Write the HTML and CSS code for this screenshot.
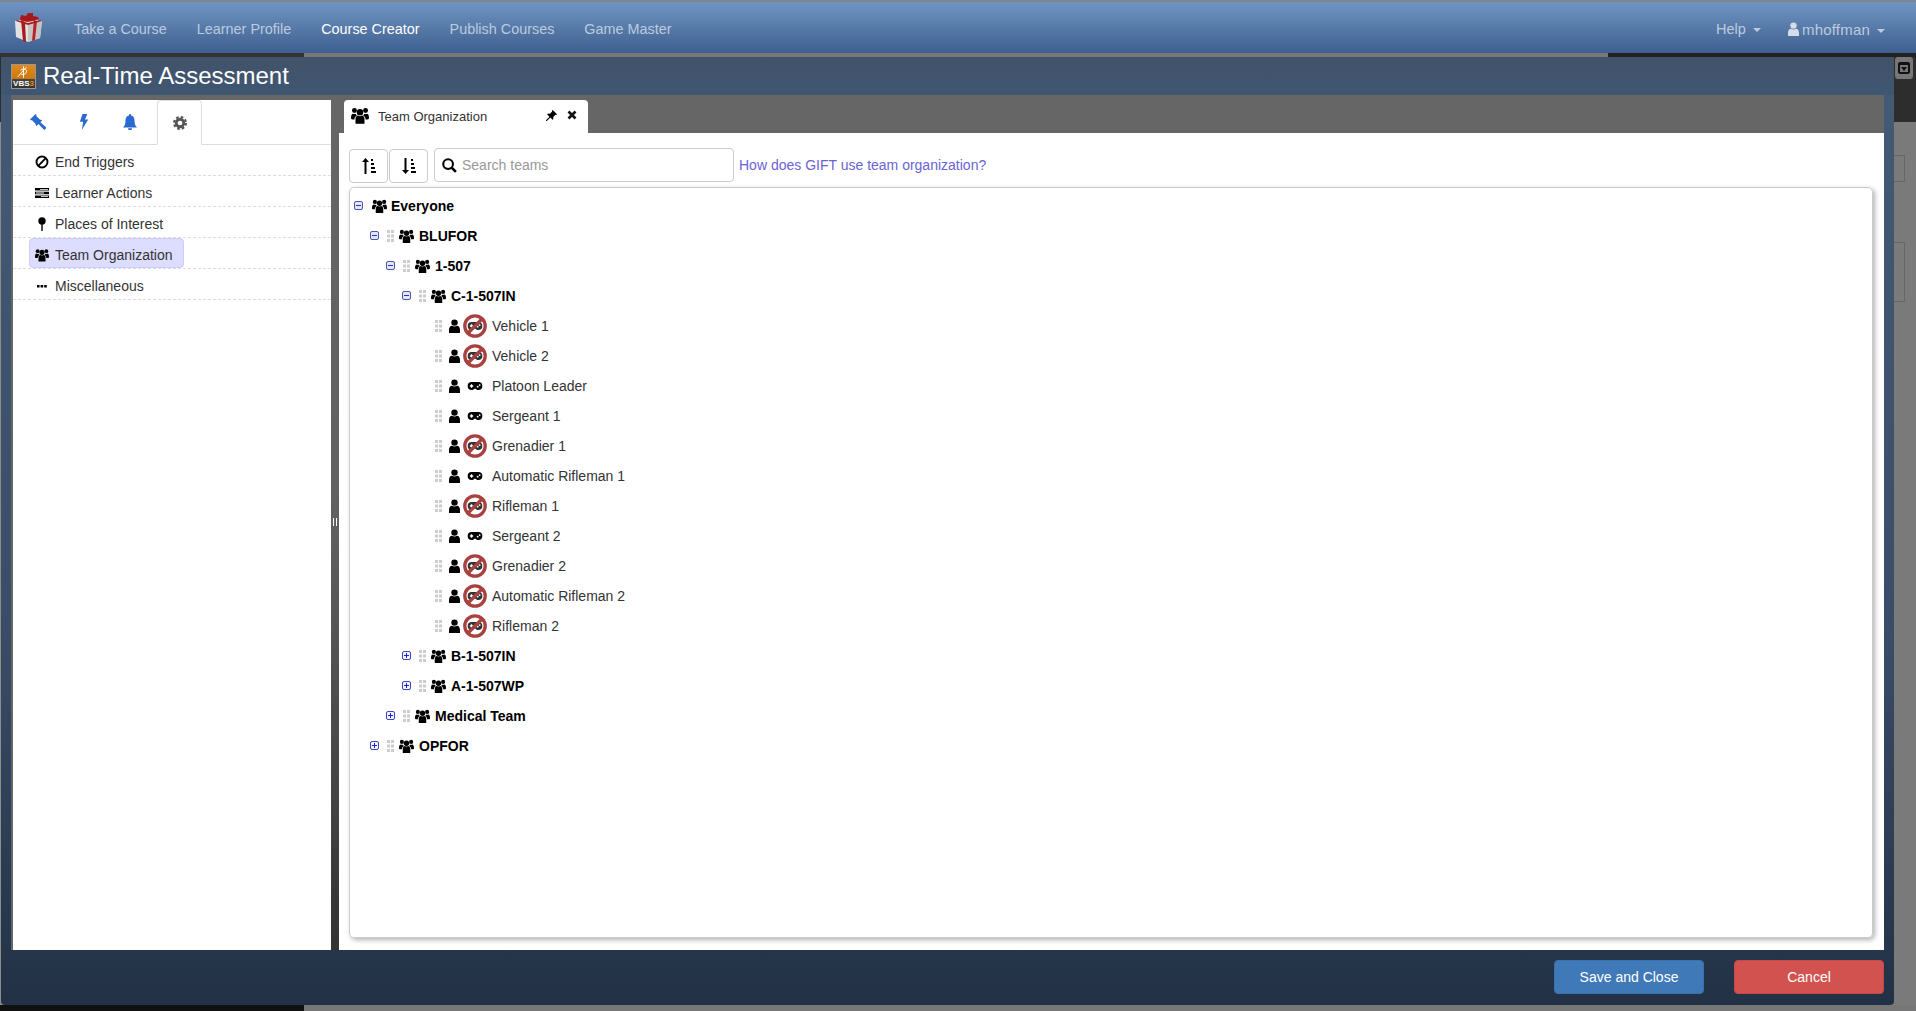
FILE: index.html
```html
<!DOCTYPE html>
<html>
<head>
<meta name="viewport" content="width=device-width, initial-scale=1.0">
<title>Real-Time Assessment</title>
<link rel="stylesheet" href="styles.css">
</head>

<body>

<!-- icons, reused with <use> further down -->
<svg class="sprite" xmlns="http://www.w3.org/2000/svg">
  <symbol id="i-users" viewBox="0 0 24 22">
    <circle cx="12" cy="6.500" r="4.300"/>
    <circle cx="4.600" cy="4.400" r="3.300"/>
    <circle cx="19.400" cy="4.400" r="3.300"/>
    <path d="M6 22v-6.500c0-2.800 1.600-4.500 3.400-4.500 1.500 1 3.700 1 5.200 0 1.800 0 3.400 1.700 3.400 4.500V22z"/>
    <path d="M0 14c0-3.300 1-5.500 2.600-5.500 1.200.8 2.700.8 3.700.3.300 1 .800 1.700 1.500 2.200-2 .9-3.200 2.700-3.200 5.300H2c-1.300 0-2-.7-2-2.300z"/>
    <path d="M24 14c0-3.300-1-5.500-2.600-5.500-1.200.8-2.700.8-3.700.3-.3 1-.8 1.700-1.500 2.200 2 .9 3.200 2.700 3.200 5.300H22c1.300 0 2-.7 2-2.300z"/>
  </symbol>
  <symbol id="i-user" viewBox="0 0 12 15">
    <circle cx="6" cy="3.800" r="3.500"/>
    <path d="M0 15v-3.500C0 9 1.400 7.400 3 7.200c1.800 1.200 4.200 1.200 6 0 1.600.2 3 1.800 3 4.300V15z"/>
  </symbol>
  <symbol id="i-pad" viewBox="0 0 24 14">
    <path d="M7 1h10a6 6 0 0 1 0 12c-2 0-3-.9-4-2h-2c-1 1.100-2 2-4 2A6 6 0 0 1 7 1z"/>
    <path fill="#fff" d="M5.800 4.500h2v1.500h1.500v2H7.800v1.500h-2V8H4.300V6h1.500z"/>
    <circle fill="#fff" cx="16" cy="8" r="1.400"/>
    <circle fill="#fff" cx="19" cy="5.600" r="1.400"/>
  </symbol>
  <symbol id="i-nopad" viewBox="0 0 24 24">
    <use href="#i-pad" x="4" y="5" width="16" height="14" opacity=".8"/>
    <circle cx="12" cy="12" r="10.200" fill="none" stroke="#a8413f" stroke-width="3.300"/>
    <path d="M5 19L19 5" stroke="#a8413f" stroke-width="3.300"/>
  </symbol>
  <symbol id="i-grip" viewBox="0 0 7 12">
    <path fill="#ccc" d="M0 0h3v3H0zM4 0h3v3H4zM0 4.500h3v3H0zM4 4.500h3v3H4zM0 9h3v3H0zM4 9h3v3H4z"/>
  </symbol>
  <symbol id="i-minus" viewBox="0 0 9 9">
    <rect x=".5" y=".5" width="8" height="8" rx="1.500" fill="#e4e6f6" stroke="#4a55b8"/>
    <path d="M2 4.500h5" stroke="#2a35a8"/>
  </symbol>
  <symbol id="i-plus" viewBox="0 0 9 9">
    <rect x=".5" y=".5" width="8" height="8" rx="1.500" fill="#f2f3fc" stroke="#3a44c4"/>
    <path d="M2 4.500h5M4.500 2v5" stroke="#1a22c8"/>
  </symbol>
  <symbol id="i-gavel" viewBox="0 0 16 16">
    <path d="M0 6.500L5.500 1l1.200 1.200-.6.600 4.200 4.200.6-.6 1.200 1.200L6.600 13 5.400 11.800l.6-.6-4.200-4.200-.6.600z" transform="translate(0 -1)"/>
    <path d="M8 9.500l1.800-1.800 6 5.300c.5.500.5 1.200 0 1.700l-.6.600c-.5.500-1.200.5-1.700 0z"/>
  </symbol>
  <symbol id="i-bolt" viewBox="0 0 10 16">
    <path d="M3.500 0h4.800L6 5.500h3.200L2.800 16l1.400-8.200H.9z"/>
  </symbol>
  <symbol id="i-bell" viewBox="0 0 16 16">
    <path d="M8 0c.6 0 1 .4 1 1v.6c2.500.4 3.500 2.400 3.500 4.900 0 4 1 5.500 2.500 7H1c1.500-1.500 2.500-3 2.500-7C3.500 4 4.500 2 7 1.600V1c0-.6.4-1 1-1zM6 14.300h4a2 2 0 0 1-4 0z"/>
  </symbol>
  <symbol id="i-cog" viewBox="0 0 16 16">
    <circle cx="8" cy="8" r="4.300" fill="none" stroke="currentColor" stroke-width="3.200"/>
    <circle cx="8" cy="8" r="6.800" fill="none" stroke="currentColor" stroke-width="2.400" stroke-dasharray="3 2.340"/>
  </symbol>
  <symbol id="i-ban" viewBox="0 0 14 14">
    <circle cx="7" cy="7" r="5.500" fill="none" stroke="#000" stroke-width="1.900"/>
    <path d="M3.200 10.800l7.600-7.600" stroke="#000" stroke-width="1.900"/>
  </symbol>
  <symbol id="i-tasks" viewBox="0 0 14 10">
    <path d="M0 0h14v2.600H0zM0 3.700h14v2.600H0zM0 7.400h14V10H0z"/>
    <path fill="#fff" d="M5 .9h8v.8H5zM1 4.600h8v.8H1zM6 8.300h7v.8H6z"/>
  </symbol>
  <symbol id="i-pin" viewBox="0 0 10 16">
    <circle cx="5" cy="4.500" r="4.200"/>
    <path d="M4.200 8h1.600v8H4.200z"/>
  </symbol>
  <symbol id="i-dots" viewBox="0 0 14 14">
    <path d="M2 6h2.600v2.600H2zM5.600 6h2.600v2.600H5.600zM9.200 6h2.600v2.600H9.200z"/>
  </symbol>
  <symbol id="i-sort-up" viewBox="0 0 14 16">
    <path d="M3.500 0L7 4H4.500v12h-2V4H0z"/>
    <path d="M9 1h2v2H9zM9 5h3v2H9zM9 9h4v2H9zM9 13h5v2H9z"/>
  </symbol>
  <symbol id="i-sort-down" viewBox="0 0 14 16">
    <path d="M3.500 16L7 12H4.500V0h-2v12H0z"/>
    <path d="M9 1h2v2H9zM9 5h3v2H9zM9 9h4v2H9zM9 13h5v2H9z"/>
  </symbol>
  <symbol id="i-search" viewBox="0 0 16 16">
    <circle cx="6.500" cy="6.500" r="5.200" fill="none" stroke="#000" stroke-width="2.200"/>
    <path d="M10.300 10.300l4.500 4.500" stroke="#000" stroke-width="2.800"/>
  </symbol>
  <symbol id="i-tack" viewBox="0 0 14 14">
    <path d="M8.500 0L14 5.500l-1 1-1-.3-2.800 2.800.2 2.500-1 1-2.900-2.900L1 14l-1-.1v-.9l4.400-4.500L1.500 5.600l1-1 2.500.2L7.800 2 7.500 1z"/>
  </symbol>
  <symbol id="i-times" viewBox="0 0 10 10">
    <path d="M1.500 1.500l7 7M8.500 1.500l-7 7" stroke="#111" stroke-width="2.600"/>
  </symbol>
</svg>

<nav class="navbar">
  <svg class="gift" viewBox="0 0 32 32">
    <path d="M2 10l16-3 11 3-2 17-12 4-12-5z" fill="#e2e2e2"/>
    <path d="M15 14l14-4-2 17-12 4z" fill="#c4c4c4"/>
    <path d="M8 9l4 2 1 20-3-1z" fill="#a9191d"/>
    <path d="M21 9l3 1-2 19-3 1z" fill="#b5242a"/>
    <path d="M3 10l12 4 14-4-2-1-12 3-11-3z" fill="#a9191d"/>
    <path d="M8 4l5 1 2-3 5 0 0 3 5 1 1 2-6 2-6 1-7-2z" fill="#a8171c"/>
  </svg>
  <ul class="nav-links">
    <li>Take a Course</li>
    <li>Learner Profile</li>
    <li class="active">Course Creator</li>
    <li>Publish Courses</li>
    <li>Game Master</li>
  </ul>
  <ul class="nav-right">
    <li>Help <span class="caret"></span></li>
    <li class="nav-account"><svg class="nav-user"><use href="#i-user"/></svg><span class="nav-name">mhoffman</span> <span class="caret"></span></li>
  </ul>
</nav>

<div class="stage">

  <!-- the page behind the dialog -->
  <div class="under-strip"><span class="seg-a"></span><span class="seg-b"></span><span class="seg-c"></span></div>
  <div class="under-head"><span class="under-btn"><span class="under-btn-in"></span></span></div>
  <div class="under-body">
    <span class="ghost ghost-a"></span>
    <span class="ghost ghost-b"></span>
  </div>
  <div class="under-foot"></div>

  <div class="modal">
    <div class="modal-title">
      <div class="vbs">
        <span class="vbs-top"><svg viewBox="0 0 24 14"><path d="M6 12L15 2M12 1v12M9 5c4-2 7-1 6 2s-4 3-6 2" fill="none" stroke="#fff" stroke-width="1"/></svg></span>
        <span class="vbs-name">VBS<b>3</b></span>
      </div>
      <h1>Real-Time Assessment</h1>
    </div>

    <div class="modal-body">
      <div class="sidebar">
        <div class="side-tabs">
          <span class="side-tab"><svg class="ic-tab"><use href="#i-gavel"/></svg></span>
          <span class="side-tab"><svg class="ic-tab ic-bolt"><use href="#i-bolt"/></svg></span>
          <span class="side-tab"><svg class="ic-tab"><use href="#i-bell"/></svg></span>
          <span class="side-tab current"><svg class="ic-tab ic-cog"><use href="#i-cog"/></svg></span>
        </div>
        <ul class="side-list">
          <li><span class="side-item"><svg class="ic-side"><use href="#i-ban"/></svg>End Triggers</span></li>
          <li><span class="side-item"><svg class="ic-side"><use href="#i-tasks"/></svg>Learner Actions</span></li>
          <li><span class="side-item"><svg class="ic-side"><use href="#i-pin"/></svg>Places of Interest</span></li>
          <li><span class="side-item selected"><svg class="ic-side"><use href="#i-users"/></svg>Team Organization</span></li>
          <li><span class="side-item"><svg class="ic-side"><use href="#i-dots"/></svg>Miscellaneous</span></li>
        </ul>
      </div>

      <div class="splitter"><span class="handle"></span></div>

      <div class="main">
        <div class="tab-strip">
          <div class="tab">
            <svg class="tab-users"><use href="#i-users"/></svg>
            <span class="tab-label">Team Organization</span>
            <svg class="tab-tack"><use href="#i-tack"/></svg>
            <svg class="tab-close"><use href="#i-times"/></svg>
          </div>
        </div>

        <div class="content">
          <div class="toolbar">
            <button class="sort"><svg><use href="#i-sort-up"/></svg></button>
            <button class="sort sort-next"><svg><use href="#i-sort-down"/></svg></button>
            <label class="search">
              <svg><use href="#i-search"/></svg>
              <input type="text" placeholder="Search teams">
            </label>
            <a class="help-link">How does GIFT use team organization?</a>
          </div>

          <div class="tree">
            <ul>
              <li>
                <div class="row team root"><svg class="exp"><use href="#i-minus"/></svg><svg class="ic-team"><use href="#i-users"/></svg>Everyone</div>
                <ul>
                  <li>
                    <div class="row team"><svg class="exp"><use href="#i-minus"/></svg><svg class="grip"><use href="#i-grip"/></svg><svg class="ic-team"><use href="#i-users"/></svg>BLUFOR</div>
                    <ul>
                      <li>
                        <div class="row team"><svg class="exp"><use href="#i-minus"/></svg><svg class="grip"><use href="#i-grip"/></svg><svg class="ic-team"><use href="#i-users"/></svg>1-507</div>
                        <ul>
                          <li>
                            <div class="row team"><svg class="exp"><use href="#i-minus"/></svg><svg class="grip"><use href="#i-grip"/></svg><svg class="ic-team"><use href="#i-users"/></svg>C-1-507IN</div>
                            <ul>
                              <li class="row leaf"><svg class="grip"><use href="#i-grip"/></svg><svg class="ic-person"><use href="#i-user"/></svg><svg class="ic-ctl"><use href="#i-nopad"/></svg>Vehicle 1</li>
                              <li class="row leaf"><svg class="grip"><use href="#i-grip"/></svg><svg class="ic-person"><use href="#i-user"/></svg><svg class="ic-ctl"><use href="#i-nopad"/></svg>Vehicle 2</li>
                              <li class="row leaf"><svg class="grip"><use href="#i-grip"/></svg><svg class="ic-person"><use href="#i-user"/></svg><span class="ctl-box"><svg><use href="#i-pad"/></svg></span>Platoon Leader</li>
                              <li class="row leaf"><svg class="grip"><use href="#i-grip"/></svg><svg class="ic-person"><use href="#i-user"/></svg><span class="ctl-box"><svg><use href="#i-pad"/></svg></span>Sergeant 1</li>
                              <li class="row leaf"><svg class="grip"><use href="#i-grip"/></svg><svg class="ic-person"><use href="#i-user"/></svg><svg class="ic-ctl"><use href="#i-nopad"/></svg>Grenadier 1</li>
                              <li class="row leaf"><svg class="grip"><use href="#i-grip"/></svg><svg class="ic-person"><use href="#i-user"/></svg><span class="ctl-box"><svg><use href="#i-pad"/></svg></span>Automatic Rifleman 1</li>
                              <li class="row leaf"><svg class="grip"><use href="#i-grip"/></svg><svg class="ic-person"><use href="#i-user"/></svg><svg class="ic-ctl"><use href="#i-nopad"/></svg>Rifleman 1</li>
                              <li class="row leaf"><svg class="grip"><use href="#i-grip"/></svg><svg class="ic-person"><use href="#i-user"/></svg><span class="ctl-box"><svg><use href="#i-pad"/></svg></span>Sergeant 2</li>
                              <li class="row leaf"><svg class="grip"><use href="#i-grip"/></svg><svg class="ic-person"><use href="#i-user"/></svg><svg class="ic-ctl"><use href="#i-nopad"/></svg>Grenadier 2</li>
                              <li class="row leaf"><svg class="grip"><use href="#i-grip"/></svg><svg class="ic-person"><use href="#i-user"/></svg><svg class="ic-ctl"><use href="#i-nopad"/></svg>Automatic Rifleman 2</li>
                              <li class="row leaf"><svg class="grip"><use href="#i-grip"/></svg><svg class="ic-person"><use href="#i-user"/></svg><svg class="ic-ctl"><use href="#i-nopad"/></svg>Rifleman 2</li>
                            </ul>
                          </li>
                          <li class="row team"><svg class="exp"><use href="#i-plus"/></svg><svg class="grip"><use href="#i-grip"/></svg><svg class="ic-team"><use href="#i-users"/></svg>B-1-507IN</li>
                          <li class="row team"><svg class="exp"><use href="#i-plus"/></svg><svg class="grip"><use href="#i-grip"/></svg><svg class="ic-team"><use href="#i-users"/></svg>A-1-507WP</li>
                        </ul>
                      </li>
                      <li class="row team"><svg class="exp"><use href="#i-plus"/></svg><svg class="grip"><use href="#i-grip"/></svg><svg class="ic-team"><use href="#i-users"/></svg>Medical Team</li>
                    </ul>
                  </li>
                  <li class="row team"><svg class="exp"><use href="#i-plus"/></svg><svg class="grip"><use href="#i-grip"/></svg><svg class="ic-team"><use href="#i-users"/></svg>OPFOR</li>
                </ul>
              </li>
            </ul>
          </div>
        </div>
      </div>
    </div>

    <div class="modal-footer">
      <button class="btn btn-save">Save and Close</button>
      <button class="btn btn-cancel">Cancel</button>
    </div>
  </div>
</div>

</body>
</html>
```

FILE: styles.css
```css
* {box-sizing: border-box;}

html, body {height: 100%}

body {
  margin: 0;
  overflow: hidden;
  display: flex;
  flex-direction: column;
  font-family: "Liberation Sans", Arial, sans-serif;
  font-size: 14px;
  color: #333;
  background-color: #808080;
}

ul {
  list-style: none;
  margin: 0;
  padding: 0;
}

svg {flex: none}

.sprite {display: none}

/* top bar */

.navbar {
  height: 53px;
  flex: none;
  display: flex;
  align-items: center;
  padding: 3px 0 0 13px;
  border-top: 2px solid #7d8594;
  background: linear-gradient(#7095c3, #3e5f8f);
}

.gift {
  width: 32px;
  height: 32px;
  margin-top: -4px;
}

.nav-links, .nav-right {
  display: flex;
  color: #bccbde;
}

.nav-links {
  margin-left: 14px;
  font-size: 14.4px;
}

.nav-links li, .nav-right li {padding: 0 15px}

.nav-links li.active {color: #fff}

.nav-right {
  margin-left: auto;
  margin-right: 16px;
  font-size: 14.5px;
}

.nav-right li.nav-account {padding-left: 12px}

.nav-name {
  font-size: 15px;
  letter-spacing: .2px;
}

.nav-user {
  width: 11px;
  height: 14px;
  margin-right: 3px;
  vertical-align: -1px;
  fill: #d5dde8;
}

.caret {
  display: inline-block;
  margin-left: 3px;
  vertical-align: middle;
  border-top: 4px solid #bccbde;
  border-left: 4px solid transparent;
  border-right: 4px solid transparent;
}

/* what shows behind the dialog */

.stage {
  flex: 1;
  position: relative;
  display: flex;
  flex-direction: column;
}

.under-strip {
  height: 4px;
  display: flex;
}

.seg-a {width: 304px; background-color: #333}
.seg-b {width: 1304px; background-color: #777}
.seg-c {flex: 1; background-color: #222}

.under-head {
  height: 65px;
  display: flex;
  justify-content: flex-end;
  background-color: #2d2d2d;
}

.under-btn {
  width: 18px;
  height: 22px;
  margin-right: 3px;
  border-radius: 3px;
  background-color: #777;
  display: flex;
  align-items: center;
  justify-content: center;
}

.under-btn-in {
  width: 12px;
  height: 12px;
  display: flex;
  align-items: center;
  justify-content: center;
  border: 2px solid #111;
  border-top-width: 3px;
  border-radius: 2px;
}

.under-btn-in::before {
  content: "";
  border-top: 4px solid #111;
  border-left: 3px solid transparent;
  border-right: 3px solid transparent;
}

.under-body {
  flex: 1;
  display: flex;
  flex-direction: column;
  align-items: flex-end;
  padding: 33px 11px 0 0;
  background: linear-gradient(90deg, #8c8c8c, #7a7a7a);
}

.ghost {
  width: 12px;
  border: 1px solid #666;
  border-left: none;
}

.ghost-a {height: 27px}
.ghost-b {height: 60px; margin-top: 60px}

.under-foot {
  height: 6px;
  background: linear-gradient(90deg, #111 304px, #777 304px);
}

/* dialog */

.modal {
  position: absolute;
  left: 1px;
  top: 4px;
  width: 1893px;
  height: 948px;
  display: flex;
  flex-direction: column;
  padding: 0;
  border-radius: 4px;
  background: linear-gradient(#445a76, #3a4d68 60%, #223145);
}

.modal-title {
  height: 38px;
  flex: none;
  display: flex;
  align-items: center;
  padding-left: 10px;
  background: linear-gradient(#425369, #3f5672);
}

.modal-title h1 {
  margin: 0 0 0 7px;
  font-size: 24px;
  font-weight: normal;
  color: #fff;
}

.vbs {
  width: 25px;
  height: 25px;
  display: flex;
  flex-direction: column;
  border: 1px solid #999;
  background: linear-gradient(#666, #333);
}

.vbs-top {
  height: 14px;
  display: block;
  background: linear-gradient(#e58a17, #c9780f);
}

.vbs-top svg {
  display: block;
  width: 23px;
  height: 14px;
}

.vbs-name {
  font-size: 8px;
  line-height: 9px;
  font-weight: bold;
  color: #fff;
  text-align: center;
}

.vbs-name b {color: #e58a17}

.modal-body {
  flex: 1;
  min-height: 0;
  display: flex;
  margin: 0 10px;
  padding-left: 2px;
  background-color: #666;
}

.sidebar {
  width: 318px;
  flex: none;
  margin-top: 5px;
  background-color: #fff;
}

.side-tabs {
  height: 45px;
  display: flex;
  padding-left: 2px;
  border-bottom: 1px solid #ddd;
}

.side-tab {
  width: 46px;
  display: flex;
  align-items: center;
  justify-content: center;
  color: #2a6ad0;
  fill: #2a6ad0;
}

.side-tab.current {
  width: 45px;
  height: 45px;
  margin-left: 4px;
  color: #555;
  fill: #555;
  border: 1px solid #ddd;
  border-bottom-color: #fff;
  border-radius: 4px 4px 0 0;
  background-color: #fff;
}

.ic-tab {
  width: 16px;
  height: 16px;
}

.ic-tab.ic-cog {
  width: 14px;
  height: 14px;
}

.side-list li {
  height: 31px;
  padding-left: 16px;
  border-bottom: 1px dashed #ddd;
}

.side-item {
  height: 30px;
  display: inline-flex;
  align-items: center;
  padding: 3px 10px 0 5px;
  color: #333;
  border: 1px solid transparent;
  border-radius: 4px;
}

.side-item.selected {
  background-color: #ddf;
  border-color: #ccf;
}

.ic-side {
  width: 14px;
  height: 14px;
  margin-right: 6px;
}

.splitter {
  width: 8px;
  flex: none;
  display: flex;
  align-items: center;
  justify-content: center;
  background: linear-gradient(#666, #606060 50%, #333);
}

.handle {
  width: 4px;
  height: 8px;
  margin-top: -2px;
  border-left: 1px solid #fff;
  border-right: 1px solid #fff;
}

.main {
  flex: 1;
  min-width: 0;
  display: flex;
  flex-direction: column;
}

.tab-strip {
  height: 38px;
  flex: none;
  display: flex;
  align-items: flex-end;
  padding-left: 5px;
  background-color: #666;
}

.tab {
  width: 244px;
  height: 33px;
  display: flex;
  align-items: center;
  padding: 0 11px 0 7px;
  font-size: 13px;
  color: #333;
  border-radius: 4px 4px 0 0;
  background-color: #fff;
}

.tab-users {
  width: 18px;
  height: 17px;
  margin-top: -2px;
}

.tab-label {
  flex: 1;
  margin-left: 9px;
}

.tab-tack {
  width: 11px;
  height: 11px;
  margin-top: -3px;
}

.tab-close {
  width: 10px;
  height: 10px;
  margin: -3px 0 0 10px;
}

.content {
  flex: 1;
  min-height: 0;
  display: flex;
  flex-direction: column;
  padding: 15px 11px 12px 10px;
  background-color: #fff;
}

.toolbar {
  height: 39px;
  flex: none;
  display: flex;
  align-items: flex-start;
}

.sort {
  width: 39px;
  height: 34px;
  margin: 1px 0 0;
  padding: 0;
  display: flex;
  align-items: center;
  justify-content: center;
  background-color: #fff;
  border: 1px solid #ccc;
  border-radius: 4px;
}

.sort-next {margin-left: 1px}

.sort svg {
  width: 14px;
  height: 16px;
}

.search {
  width: 300px;
  height: 34px;
  margin-left: 6px;
  display: flex;
  align-items: center;
  padding-left: 7px;
  border: 1px solid #ccc;
  border-radius: 4px;
}

.search svg {
  width: 15px;
  height: 15px;
}

.search input {
  flex: 1;
  min-width: 0;
  margin-left: 5px;
  padding: 0;
  border: none;
  outline: none;
  font-family: "Liberation Sans", Arial, sans-serif;
  font-size: 14px;
}

.search input::placeholder {color: #999}

.help-link {
  align-self: center;
  margin: -5px 0 0 5px;
  color: #6a63d6;
}

.tree {
  flex: 1;
  min-height: 0;
  padding: 3px 0 0 4px;
  border: 1px solid #ccc;
  border-radius: 5px;
  box-shadow: 2px 2px 5px rgba(0, 0, 0, .3);
}

.tree ul ul {padding-left: 16px}

.row {
  height: 30px;
  display: flex;
  align-items: center;
}

.row.team {
  font-weight: bold;
  color: #000;
}

.exp {
  width: 9px;
  height: 9px;
  margin: -2px 8px 0 0;
}

.grip {
  width: 7px;
  height: 12px;
  margin: -1px 5px 0 0;
}

.ic-team {
  width: 15px;
  height: 14px;
  margin-right: 5px;
}

.root .exp {margin-right: 9px}
.root .ic-team {margin-right: 4px}

.leaf {
  padding-left: 17px;
  color: #333;
}

.ic-person {
  width: 11px;
  height: 14px;
  margin: 0 3px 0 2px;
}

.ic-ctl {
  width: 24px;
  height: 24px;
  margin-right: 5px;
}

.ctl-box {
  width: 24px;
  height: 24px;
  margin-right: 5px;
  display: flex;
  align-items: center;
  justify-content: center;
}

.ctl-box svg {
  width: 16px;
  height: 10px;
}

.modal-footer {
  height: 55px;
  flex: none;
  display: flex;
  justify-content: flex-end;
  gap: 30px;
  padding: 10px 10px 0 0;
}

.btn {
  width: 150px;
  height: 34px;
  padding: 0;
  font-family: "Liberation Sans", Arial, sans-serif;
  font-size: 14px;
  color: #fff;
  border: 1px solid transparent;
  border-radius: 4px;
}

.btn-save {
  background-color: #3f79b8;
  border-color: #3a70ac;
}

.btn-cancel {
  background-color: #d1524e;
  border-color: #c9474a;
}
```
